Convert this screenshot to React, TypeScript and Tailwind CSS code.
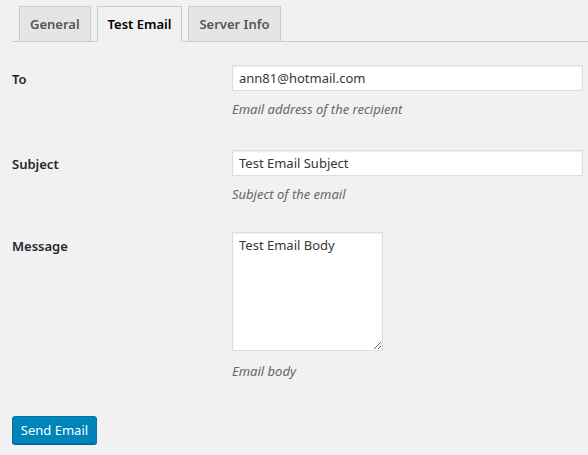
import React from 'react';

const font = { fontFamily: '"Noto Sans", "Open Sans", sans-serif' };

const tabs = ['General', 'Test Email', 'Server Info'];

function Row({ label, children, hint, pb, hintTop }: { label: string; children: React.ReactNode; hint: string; pb: string; hintTop: string }) {
  return (
    <div className="flex">
      <div className="w-[220px] shrink-0 pt-5 text-[13px] font-semibold leading-[18px] text-[#23282d]">{label}</div>
      <div className={`flex-1 pt-[15px] pr-[5px] ${pb}`}>
        {children}
        <p className={`${hintTop} text-[13px] italic leading-[20px] text-[#666]`}>{hint}</p>
      </div>
    </div>
  );
}

const inputCls =
  'block h-[26px] w-full border border-[#ddd] bg-white px-[6px] text-[13px] text-[#32373c] shadow-[inset_0_1px_2px_rgba(0,0,0,0.07)] outline-none';

export default function App() {
  const active = 'Test Email';
  return (
    <div className="min-h-[455px] bg-[#f1f1f1] pl-3 pt-[6px]" style={font}>
      {/* tabs */}
      <div className="flex border-b border-[#ccc] pl-[7px]">
        {tabs.map((t) => (
          <div
            key={t}
            className={
              t === active
                ? 'mr-[6px] -mb-px h-[36px] border border-b-[#f1f1f1] border-[#ccc] bg-[#f1f1f1] px-[10px] pt-[6px] text-[13px] font-semibold leading-[22px] text-black'
                : 'mr-[6px] h-[35px] border border-b-0 border-[#ccc] bg-[#e5e5e5] px-[10px] pt-[6px] text-[13px] font-semibold leading-[22px] text-[#555]'
            }
          >
            {t}
          </div>
        ))}
      </div>

      <div className="mt-2">
        <Row label="To" hint="Email address of the recipient" pb="pb-[16px]" hintTop="mt-[8px]">
          <input defaultValue="ann81@hotmail.com" className={inputCls} style={font} />
        </Row>
        <Row label="Subject" hint="Subject of the email" pb="pb-[13px]" hintTop="mt-[8px]">
          <input defaultValue="Test Email Subject" className={inputCls} style={font} />
        </Row>
        <Row label="Message" hint="Email body" pb="pb-[15px]" hintTop="mt-[10px]">
          <textarea
            defaultValue="Test Email Body"
            className="block h-[119px] w-[151px] border border-[#ddd] bg-white px-[6px] py-[2px] text-[13px] leading-[20px] text-[#32373c] shadow-[inset_0_1px_2px_rgba(0,0,0,0.07)] outline-none"
            style={font}
          />
        </Row>
      </div>

      <div className="pt-5">
        <button
          className="h-[28px] w-[85px] whitespace-nowrap rounded-[3px] border border-[#0073aa] bg-[#0085ba] px-0 text-center text-[13px] leading-[26px] text-white shadow-[0_1px_0_#006799]"
          style={font}
        >
          Send Email
        </button>
      </div>
    </div>
  );
}
